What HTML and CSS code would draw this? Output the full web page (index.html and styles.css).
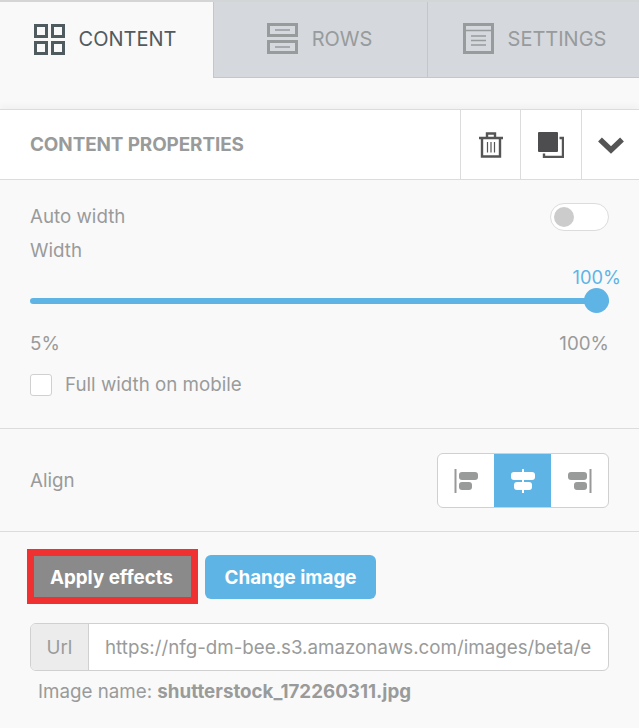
FILE: index.html

```html
<!DOCTYPE html>
<html lang="en">
<head>
  <meta charset="UTF-8">
  <title>Content properties</title>
  <link rel="stylesheet" href="styles.css">
</head>
<body>
  <div class="tabs">
    <div class="tab active">
      <svg class="tab-icon" viewBox="0 0 31 31">
        <path d="M1.5 1.5h11v11h-11zM18.5 1.5h11v11h-11zM1.5 18.5h11v11h-11zM18.5 18.5h11v11h-11z" fill="none" stroke="currentColor" stroke-width="3"/>
      </svg>
      <span>CONTENT</span>
    </div>
    <div class="tab rows">
      <svg class="tab-icon" viewBox="0 0 31 31">
        <path d="M1.5 1.5h28v11h-28zM1.5 18.5h28v11h-28z" fill="none" stroke="currentColor" stroke-width="3"/>
        <path d="M8 7h15M8 24h15" fill="none" stroke="currentColor" stroke-width="1.5"/>
      </svg>
      <span>ROWS</span>
    </div>
    <div class="tab settings">
      <svg class="tab-icon" viewBox="0 0 31 31">
        <path d="M1.5 1.5h28v28h-28z" fill="none" stroke="currentColor" stroke-width="3"/>
        <path d="M2 7.5h27M8 13h15M8 17.5h15M8 22h15" fill="none" stroke="currentColor" stroke-width="1.5"/>
      </svg>
      <span>SETTINGS</span>
    </div>
  </div>

  <div class="props-head">
    <h2>CONTENT PROPERTIES</h2>
    <div class="head-btn">
      <svg width="24" height="26" viewBox="0 0 24 26">
        <path d="M0 6h24M8 5.500V1.500h8v4M3 6v18.500h18V6" fill="none" stroke="#555" stroke-width="2.400"/>
        <path d="M8.500 10v10.500M12 10v10.500M15.500 10v10.500" fill="none" stroke="#555" stroke-width="1.200"/>
      </svg>
    </div>
    <div class="head-btn copy">
      <svg width="26" height="26" viewBox="0 0 26 26">
        <path d="M6 21.500V25h19V6h-3.500" fill="none" stroke="#555" stroke-width="2.400"/>
        <rect x="0" y="0" width="20" height="20" rx="1" fill="#4d4d4f"/>
      </svg>
    </div>
    <div class="head-btn last">
      <svg width="28" height="18" viewBox="0 0 28 18">
        <path d="M3 3.500l11 10.500L25 3.500" fill="none" stroke="#555" stroke-width="5.500" stroke-linejoin="miter"/>
      </svg>
    </div>
  </div>

  <section class="width-section">
    <div class="row-between">
      <span class="label">Auto width</span>
      <span class="switch"><i></i></span>
    </div>
    <div class="label width-label">Width</div>
    <div class="slider-value">100%</div>
    <div class="slider"><i></i></div>
    <div class="row-between limits">
      <span class="label">5%</span>
      <span class="label">100%</span>
    </div>
    <div class="check-row">
      <span class="checkbox"></span>
      <span class="label">Full width on mobile</span>
    </div>
  </section>

  <section class="align-section">
    <span class="label align-label">Align</span>
    <div class="align-group">
      <div class="align-btn">
        <svg width="26" height="26" viewBox="0 0 26 26">
          <path d="M2.500 1v24" stroke="#999" stroke-width="2"/>
          <rect x="6" y="4" width="19" height="8" rx="3" fill="#999b9b"/>
          <rect x="6" y="14" width="13" height="8" rx="3" fill="#999b9b"/>
        </svg>
      </div>
      <div class="align-btn on">
        <svg width="26" height="26" viewBox="0 0 26 26">
          <path d="M13 1v24" stroke="#fff" stroke-width="2"/>
          <rect x="1" y="4" width="24" height="8" rx="3" fill="#fff"/>
          <rect x="4" y="14" width="18" height="8" rx="3" fill="#fff"/>
        </svg>
      </div>
      <div class="align-btn">
        <svg width="26" height="26" viewBox="0 0 26 26">
          <path d="M23.500 1v24" stroke="#999" stroke-width="2"/>
          <rect x="1" y="4" width="19" height="8" rx="3" fill="#999b9b"/>
          <rect x="7" y="14" width="13" height="8" rx="3" fill="#999b9b"/>
        </svg>
      </div>
    </div>
  </section>

  <section class="image-section">
    <div class="btn-row">
      <button type="button" class="btn-effects">Apply effects</button>
      <button type="button" class="btn-change">Change image</button>
    </div>
    <div class="url-field">
      <span class="url-addon">Url</span>
      <input class="url-value" type="text" readonly value="https://nfg-dm-bee.s3.amazonaws.com/images/beta/example/shutterstock_172260311.jpg">
    </div>
    <div class="image-name">Image name: <strong>shutterstock_172260311.jpg</strong></div>
  </section>
</body>
</html>
```

FILE: styles.css

```css
:root {
  --color-azul: #5fb4e6;
  --color-texto: #999b9b;
  --color-linea: #dcdcdc;
  --color-fondo: #f9f9f9;
}

* {
  box-sizing: border-box;
}

html {
  background: var(--color-fondo);
}

body {
  margin: 0;
  width: 639px;
  height: 728px;
  overflow: hidden;
  background: var(--color-fondo);
  color: var(--color-texto);
  font-family: Inter, 'Liberation Sans', sans-serif;
  font-size: 18.75px;
}

.tabs {
  display: flex;
  height: 78px;
  border-top: 2px solid #d3d5d6;
}

.tab {
  flex: 1;
  display: flex;
  align-items: center;
  justify-content: center;
  gap: 14px;
  padding-bottom: 2px;
  background: #d5d8dc;
  border-left: 1px solid #c4c7ca;
  border-bottom: 1px solid #c4c7ca;
  color: #979b9c;
  font-size: 20px;
}

.tab.active {
  flex: 0 0 213px;
  padding-right: 3px;
  background: var(--color-fondo);
  border-left: 0;
  border-bottom: 0;
  color: #505b60;
}

.tab.rows {
  flex: 0 0 214px;
  padding-right: 2px;
}

.tab.settings {
  padding-left: 2px;
}

.tab-icon {
  width: 31px;
  height: 31px;
}

.props-head {
  display: flex;
  align-items: stretch;
  height: 71px;
  margin-top: 31px;
  background: #fff;
  border-top: 1px solid var(--color-linea);
  border-bottom: 1px solid var(--color-linea);
  box-shadow: 0 -4px 6px rgba(0, 0, 0, 0.03);
}

.props-head h2 {
  flex: 1;
  margin: 0;
  padding-left: 30px;
  align-self: center;
  font-size: 18.9px;
  font-weight: 700;
  letter-spacing: -0.1px;
}

.head-btn {
  display: flex;
  align-items: center;
  justify-content: center;
  width: 60px;
  border-left: 1px solid var(--color-linea);
}

.head-btn.copy {
  width: 61px;
}

.head-btn.last {
  width: 58px;
}

.label {
  font-size: 18.75px;
  line-height: 22px;
}

.align-label {
  padding-top: 1px;
}

.row-between {
  display: flex;
  align-items: center;
  justify-content: space-between;
}

.width-section {
  height: 249px;
  padding: 23px 30px 0;
  border-bottom: 1px solid var(--color-linea);
}

.switch {
  display: block;
  width: 59px;
  height: 28px;
  padding: 3px;
  background: #fff;
  border: 1px solid var(--color-linea);
  border-radius: 14px;
}

.switch i {
  display: block;
  width: 20px;
  height: 20px;
  background: #ccc;
  border-radius: 50%;
}

.width-label {
  margin-top: 9px;
}

.slider-value {
  margin-top: 2px;
  margin-right: -12px;
  padding-top: 2px;
  text-align: right;
  color: var(--color-azul);
  font-size: 18.3px;
  line-height: 22px;
}

.slider {
  position: relative;
  height: 6px;
  margin-top: 10px;
  background: var(--color-azul);
  border-radius: 3px;
}

.slider i {
  position: absolute;
  right: 0;
  top: -10px;
  width: 25px;
  height: 25px;
  background: var(--color-azul);
  border-radius: 50%;
}

.limits {
  margin-top: 29px;
}

.check-row {
  display: flex;
  align-items: center;
  gap: 13px;
  margin-top: 19px;
}

.checkbox {
  width: 22px;
  height: 22px;
  background: #fff;
  border: 1px solid #d0d0d0;
  border-radius: 3px;
}

.align-section {
  display: flex;
  align-items: center;
  justify-content: space-between;
  height: 103px;
  padding: 0 30px;
  border-bottom: 1px solid var(--color-linea);
}

.align-group {
  display: flex;
  height: 55px;
  overflow: hidden;
  background: #fff;
  border: 1px solid #d0d0d0;
  border-radius: 6px;
}

.align-btn {
  display: flex;
  align-items: center;
  justify-content: center;
  width: 57px;
  padding-top: 1px;
}

.align-btn:first-child {
  width: 56px;
}

.align-btn.on {
  background: var(--color-azul);
}

.image-section {
  padding: 17px 30px 0;
}

.btn-row {
  display: flex;
  align-items: center;
  gap: 7px;
  margin-left: -3px;
}

button {
  height: 44px;
  padding: 1px 0 0;
  border: 0;
  color: #fff;
  font-family: inherit;
  font-size: 18.8px;
  font-weight: 700;
}

.btn-effects {
  width: 171px;
  height: 55px;
  padding-right: 2px;
  background: #8a8a8a;
  border: 7px solid #ef3131;
}

.btn-change {
  width: 171px;
  background: var(--color-azul);
  border-radius: 6px;
}

.url-field {
  display: flex;
  height: 48px;
  margin-top: 19px;
  overflow: hidden;
  background: #fff;
  border: 1px solid #d0d0d0;
  border-radius: 6px;
}

.url-addon {
  display: flex;
  align-items: center;
  justify-content: center;
  flex: 0 0 58px;
  background: #ececec;
  border-right: 1px solid #d0d0d0;
}

.url-value {
  flex: 1;
  min-width: 0;
  padding: 0 17px 0 16px;
  border: 0;
  outline: 0;
  background: transparent;
  color: inherit;
  font-family: inherit;
  font-size: 18.75px;
}

.image-name {
  margin-top: 10px;
  padding-left: 8px;
  line-height: 22px;
}
```
